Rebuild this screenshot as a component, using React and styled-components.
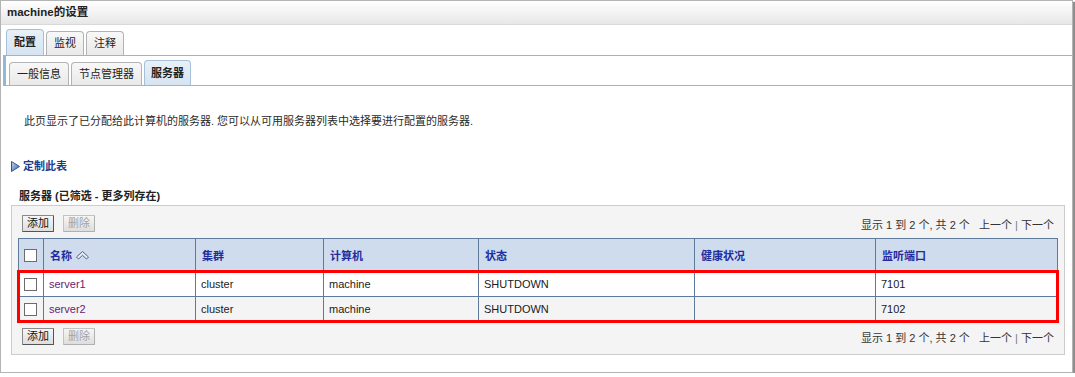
import styled, { createGlobalStyle } from 'styled-components'

const GlobalStyle = createGlobalStyle`
  body {
    margin: 0;
    background: #ffffff;
    font-family: "Liberation Sans", "Noto Sans CJK SC", sans-serif;
    font-size: 11px;
    color: #222222;
  }
`

const Panel = styled.div`
  box-sizing: border-box;
  width: 1073px;
  height: 373px;
  border: 1px solid #b4b4b4;
  box-shadow: 2px 2px 1px #8f8f8f;
  background: #ffffff;
`

const Header = styled.div`
  height: 23px;
  line-height: 23px;
  padding-left: 6px;
  font-size: 11.5px;
  font-weight: bold;
  color: #222222;
  background: linear-gradient(#ffffff, #e7e7e7);
  border-bottom: 1px solid #d9d9d9;
`

const TabArea = styled.div`
  margin-left: 2px;
`

const TabRow = styled.div`
  display: flex;
  align-items: flex-end;
  gap: ${({ $gap }) => $gap}px;
  padding: ${({ $top }) => $top}px 0 0 ${({ $left }) => $left}px;
  border-bottom: 1px solid #93b8d4;
  border-left: ${({ $bar }) => ($bar ? '3px solid #93b8d4' : 'none')};
`

const Tab = styled.div`
  box-sizing: border-box;
  height: ${({ $active, $h }) => ($active ? $h + 2 : $h)}px;
  line-height: ${({ $active, $h }) => ($active ? $h + 1 : $h - 1)}px;
  padding: 0 ${({ $pad }) => $pad}px;
  border: 1px solid ${({ $active }) => ($active ? '#a6c0d8' : '#b3b3b3')};
  border-bottom: none;
  border-radius: 4px 4px 0 0;
  background: ${({ $active }) =>
    $active
      ? 'linear-gradient(#e8f0f8, #d6e4f1)'
      : 'linear-gradient(#f8f8f8, #e9e9e9)'};
  font-weight: ${({ $active }) => ($active ? 'bold' : 'normal')};
  color: #222222;
  white-space: nowrap;
`

const Content = styled.div`
  padding: 0 7px 0 10px;
`

const Intro = styled.p`
  margin: 28px 0 0 13px;
  line-height: 14px;
  color: #2a2a2a;
`

const Customize = styled.div`
  display: flex;
  align-items: center;
  gap: 3px;
  margin-top: 31px;
  line-height: 14px;
  font-weight: bold;
  color: #1d3d8c;
`

const TableTitle = styled.div`
  margin: 16px 0 0 8px;
  line-height: 14px;
  font-weight: bold;
  color: #222222;
`

const TableBox = styled.div`
  margin-top: 2px;
  padding: 9px 6px 9px;
  border: 1px solid #cccccc;
  background: #f4f4f4;
`

const Toolbar = styled.div`
  display: flex;
  align-items: center;
  justify-content: space-between;
  padding: 0 4px;
  margin: ${({ $bottom }) => ($bottom ? '6px 0 0' : '0 0 6px')};
`

const Buttons = styled.div`
  display: flex;
  gap: 9px;
`

const Button = styled.button`
  box-sizing: border-box;
  width: 32px;
  height: 17px;
  padding: 0;
  font-family: inherit;
  font-size: 11px;
  line-height: 15px;
  color: ${({ disabled }) => (disabled ? '#a3a3a3' : '#111111')};
  background: linear-gradient(#f6f6f6, #dedede);
  border: 1px solid ${({ disabled }) => (disabled ? '#c2c2c2' : '#8a8a8a')};
  border-right-color: ${({ disabled }) => (disabled ? '#b0b0b0' : '#555555')};
  border-bottom-color: ${({ disabled }) => (disabled ? '#b0b0b0' : '#555555')};
  border-radius: 1px;
`

const Pager = styled.div`
  color: #333333;
  white-space: pre;
  & > span {
    color: #777777;
  }
`

const TableWrap = styled.div`
  position: relative;
`

const Grid = styled.table`
  width: 100%;
  table-layout: fixed;
  border-collapse: collapse;
`

const HeadCell = styled.th`
  height: 32px;
  padding: 0 0 0 6px;
  text-align: left;
  font-weight: bold;
  color: #1f2c9e;
  background: #cfdcee;
  border: 1px solid #5f7b9c;
  white-space: nowrap;
`

const Cell = styled.td`
  height: 24px;
  padding: 0 0 0 5px;
  background: ${({ $alt }) => ($alt ? '#f4f4f4' : '#ffffff')};
  border: 1px solid #5f7b9c;
  color: #1a1a1a;
  white-space: nowrap;
`

const CheckCell = styled.td`
  padding: 0 0 0 5px;
  background: ${({ $alt, $head }) =>
    $head ? '#cfdcee' : $alt ? '#f4f4f4' : '#ffffff'};
  border: 1px solid #5f7b9c;
`

const Box = styled.span`
  display: block;
  width: 11px;
  height: 11px;
  border: 1px solid #6c6c6c;
  background: #ffffff;
`

const Link = styled.span`
  color: #6a2272;
`

const Highlight = styled.div`
  position: absolute;
  top: 32px;
  left: -1px;
  right: -1px;
  bottom: -1px;
  border: 3px solid #ff0000;
  pointer-events: none;
`

const SortTitle = styled.span`
  display: inline-flex;
  align-items: center;
  gap: 4px;
`

const widths = [25, 152, 128, 155, 216, 181, 182]

const rows = [
  { name: 'server1', cluster: 'cluster', machine: 'machine', state: 'SHUTDOWN', health: '', port: '7101' },
  { name: 'server2', cluster: 'cluster', machine: 'machine', state: 'SHUTDOWN', health: '', port: '7102' },
]

function Arrow() {
  return (
    <svg width="9" height="11" viewBox="0 0 9 11">
      <defs>
        <linearGradient id="tri" x1="0" y1="0" x2="1" y2="1">
          <stop offset="0" stopColor="#c5d6ee" />
          <stop offset="1" stopColor="#3c62a8" />
        </linearGradient>
      </defs>
      <polygon points="0.5,0.5 8.5,5.5 0.5,10.5" fill="url(#tri)" stroke="#2f5597" strokeWidth="1" />
    </svg>
  )
}

function SortIcon() {
  return (
    <svg width="13" height="9" viewBox="0 0 13 9">
      <polygon
        points="0.5,6 6.5,0.5 12.5,6 10.5,8 6.5,4.3 2.5,8"
        fill="#e6ecf5"
        stroke="#4f6284"
        strokeWidth="1"
        strokeLinejoin="round"
      />
    </svg>
  )
}

function Toolbars({ bottom }) {
  return (
    <Toolbar $bottom={bottom}>
      <Buttons>
        <Button>添加</Button>
        <Button disabled>删除</Button>
      </Buttons>
      <Pager>
        显示 1 到 2 个, 共 2 个   上一个 <span>|</span> 下一个
      </Pager>
    </Toolbar>
  )
}

export default function App() {
  return (
    <>
      <GlobalStyle />
      <Panel>
        <Header>machine的设置</Header>
        <TabArea>
          <TabRow $gap={2} $top={4} $left={3}>
            <Tab $h={24} $pad={7} $active>配置</Tab>
            <Tab $h={24} $pad={7}>监视</Tab>
            <Tab $h={24} $pad={7}>注释</Tab>
          </TabRow>
          <TabRow $gap={2} $top={4} $left={3} $bar>
            <Tab $h={23} $pad={7}>一般信息</Tab>
            <Tab $h={23} $pad={7}>节点管理器</Tab>
            <Tab $h={23} $pad={6} $active>服务器</Tab>
          </TabRow>
        </TabArea>
        <Content>
          <Intro>
            此页显示了已分配给此计算机的服务器. 您可以从可用服务器列表中选择要进行配置的服务器.
          </Intro>
          <Customize>
            <Arrow />
            定制此表
          </Customize>
          <TableTitle>服务器 (已筛选 - 更多列存在)</TableTitle>
          <TableBox>
            <Toolbars />
            <TableWrap>
              <Grid>
                <colgroup>
                  {widths.map((w, i) => (
                    <col key={i} style={{ width: w }} />
                  ))}
                </colgroup>
                <thead>
                  <tr>
                    <CheckCell as="th" $head>
                      <Box />
                    </CheckCell>
                    <HeadCell>
                      <SortTitle>
                        名称 <SortIcon />
                      </SortTitle>
                    </HeadCell>
                    <HeadCell>集群</HeadCell>
                    <HeadCell>计算机</HeadCell>
                    <HeadCell>状态</HeadCell>
                    <HeadCell>健康状况</HeadCell>
                    <HeadCell>监听端口</HeadCell>
                  </tr>
                </thead>
                <tbody>
                  {rows.map((r, i) => (
                    <tr key={r.name}>
                      <CheckCell $alt={i % 2 === 1}>
                        <Box />
                      </CheckCell>
                      <Cell $alt={i % 2 === 1}>
                        <Link>{r.name}</Link>
                      </Cell>
                      <Cell $alt={i % 2 === 1}>{r.cluster}</Cell>
                      <Cell $alt={i % 2 === 1}>{r.machine}</Cell>
                      <Cell $alt={i % 2 === 1}>{r.state}</Cell>
                      <Cell $alt={i % 2 === 1}>{r.health}</Cell>
                      <Cell $alt={i % 2 === 1}>{r.port}</Cell>
                    </tr>
                  ))}
                </tbody>
              </Grid>
              <Highlight />
            </TableWrap>
            <Toolbars bottom />
          </TableBox>
        </Content>
      </Panel>
    </>
  )
}
